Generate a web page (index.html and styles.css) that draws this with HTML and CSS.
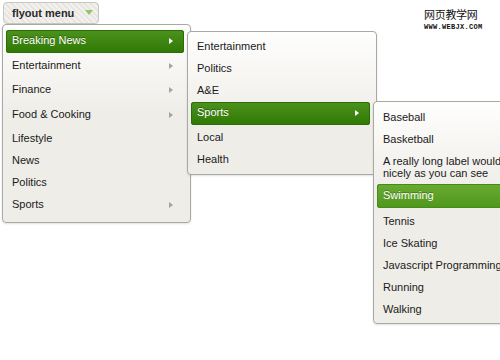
FILE: index.html
```html
<!DOCTYPE html>
<html lang="en">
<head>
    <meta charset="UTF-8">
    <meta name="viewport" content="width=device-width, initial-scale=1.0">
    <title>Flyout menu</title>
    <link rel="stylesheet" href="styles.css">
</head>
<body>
    <!-- Marca de agua -->
    <div class="watermark">
        <div class="watermark-cn">网页教学网</div>
        <div class="watermark-url">WWW.WEBJX.COM</div>
    </div>

    <div class="flyout">
        <div class="flyout-button">flyout menu <span class="caret"></span></div>

        <ul class="menu">
            <li class="menu-item has-sub open">Breaking News
                <ul class="menu submenu">
                    <li class="menu-item">Entertainment</li>
                    <li class="menu-item">Politics</li>
                    <li class="menu-item">A&amp;E</li>
                    <li class="menu-item has-sub open">Sports
                        <ul class="menu submenu deep">
                            <li class="menu-item">Baseball</li>
                            <li class="menu-item">Basketball</li>
                            <li class="menu-item multi">A really long label would wrap nicely as you can see</li>
                            <li class="menu-item hover">Swimming</li>
                            <li class="menu-item">Tennis</li>
                            <li class="menu-item">Ice Skating</li>
                            <li class="menu-item">Javascript Programming</li>
                            <li class="menu-item">Running</li>
                            <li class="menu-item">Walking</li>
                        </ul>
                    </li>
                    <li class="menu-item">Local</li>
                    <li class="menu-item">Health</li>
                </ul>
            </li>
            <li class="menu-item has-sub">Entertainment</li>
            <li class="menu-item has-sub">Finance</li>
            <li class="menu-item has-sub">Food &amp; Cooking</li>
            <li class="menu-item">Lifestyle</li>
            <li class="menu-item">News</li>
            <li class="menu-item">Politics</li>
            <li class="menu-item has-sub">Sports</li>
        </ul>
    </div>
</body>
</html>
```

FILE: styles.css
```css
* {
    margin: 0;
    padding: 0;
    box-sizing: border-box;
}

html, body {
    overflow: hidden;
}

body {
    height: 100vh;
    background: #fff;
    font-family: "Liberation Sans", Arial, sans-serif;
    font-size: 11px;
    color: #1a1a1a;
}

/* Boton principal */
.flyout {
    padding: 2px 0 0 2px;
}

.flyout-button {
    display: inline-block;
    margin-left: 1px;
    padding: 4px 5px 3px 8px;
    line-height: 13px;
    border: 1px solid #c6c6c2;
    border-radius: 4px;
    background: repeating-linear-gradient(45deg, #f2f1ed 0 2px, #e7e6e1 2px 4px);
    font-weight: bold;
    color: #2a2a2a;
}

.caret {
    display: inline-block;
    vertical-align: 2px;
    margin-left: 8px;
    border-left: 4px solid transparent;
    border-right: 4px solid transparent;
    border-top: 5px solid #93c46a;
}

/* Menus */
.menu {
    list-style: none;
    width: 189px;
    padding: 5px 0 3px;
    border: 1px solid #a8a8a5;
    border-radius: 4px;
    background: linear-gradient(#fefefd, #efede8 90px);
    box-shadow: 0 1px 2px rgba(0, 0, 0, 0.12);
}

.menu-item {
    position: relative;
    margin: 0 6px 0 3px;
    padding: 0 6px 1px;
    line-height: 21px;
    white-space: nowrap;
    color: #1a1a1a;
    text-shadow: none;
}

.menu-item.has-sub {
    padding-bottom: 2px;
    margin-bottom: 1.5px;
}

.menu-item.has-sub::after {
    content: "";
    position: absolute;
    right: 11px;
    top: 8px;
    border-top: 3.5px solid transparent;
    border-bottom: 3.5px solid transparent;
    border-left: 4px solid #a3a3a0;
}

.menu-item.open {
    border-radius: 3px;
    background: linear-gradient(#4d921e, #2e7903);
    box-shadow: inset 0 0 0 1px #2c6d07;
    color: #fff;
    text-shadow: 0 -1px 0 rgba(0, 0, 0, 0.35);
}

.menu-item.open::after {
    border-left-color: #fff;
}

.menu-item.hover {
    margin-bottom: 3px;
    padding-top: 1px;
    padding-bottom: 2px;
    border-radius: 3px;
    background: linear-gradient(#6aab32, #4f971c);
    box-shadow: inset 0 0 0 1px #438c17;
    color: #fff;
    text-shadow: 0 -1px 0 rgba(0, 0, 0, 0.3);
}

.menu-item.multi {
    white-space: normal;
    line-height: 12px;
    padding-top: 4px;
    padding-bottom: 5px;
}

.submenu {
    position: absolute;
    top: 1px;
    left: calc(100% + 3px);
    width: 190px;
    padding: 4px 0 3px;
    z-index: 1;
}

.submenu.deep {
    top: -1px;
    padding: 5px 0 2px;
}

/* Marca de agua */
.watermark {
    position: absolute;
    top: 7px;
    left: 424px;
    color: #111;
    z-index: 5;
}

.watermark-cn {
    font-family: "Noto Sans CJK SC", sans-serif;
    font-size: 11px;
    line-height: 14px;
    letter-spacing: -0.3px;
}

.watermark-url {
    margin-top: 2px;
    font-family: "Liberation Mono", monospace;
    font-size: 7px;
    font-weight: bold;
    line-height: 9px;
    letter-spacing: 0.3px;
}
```
